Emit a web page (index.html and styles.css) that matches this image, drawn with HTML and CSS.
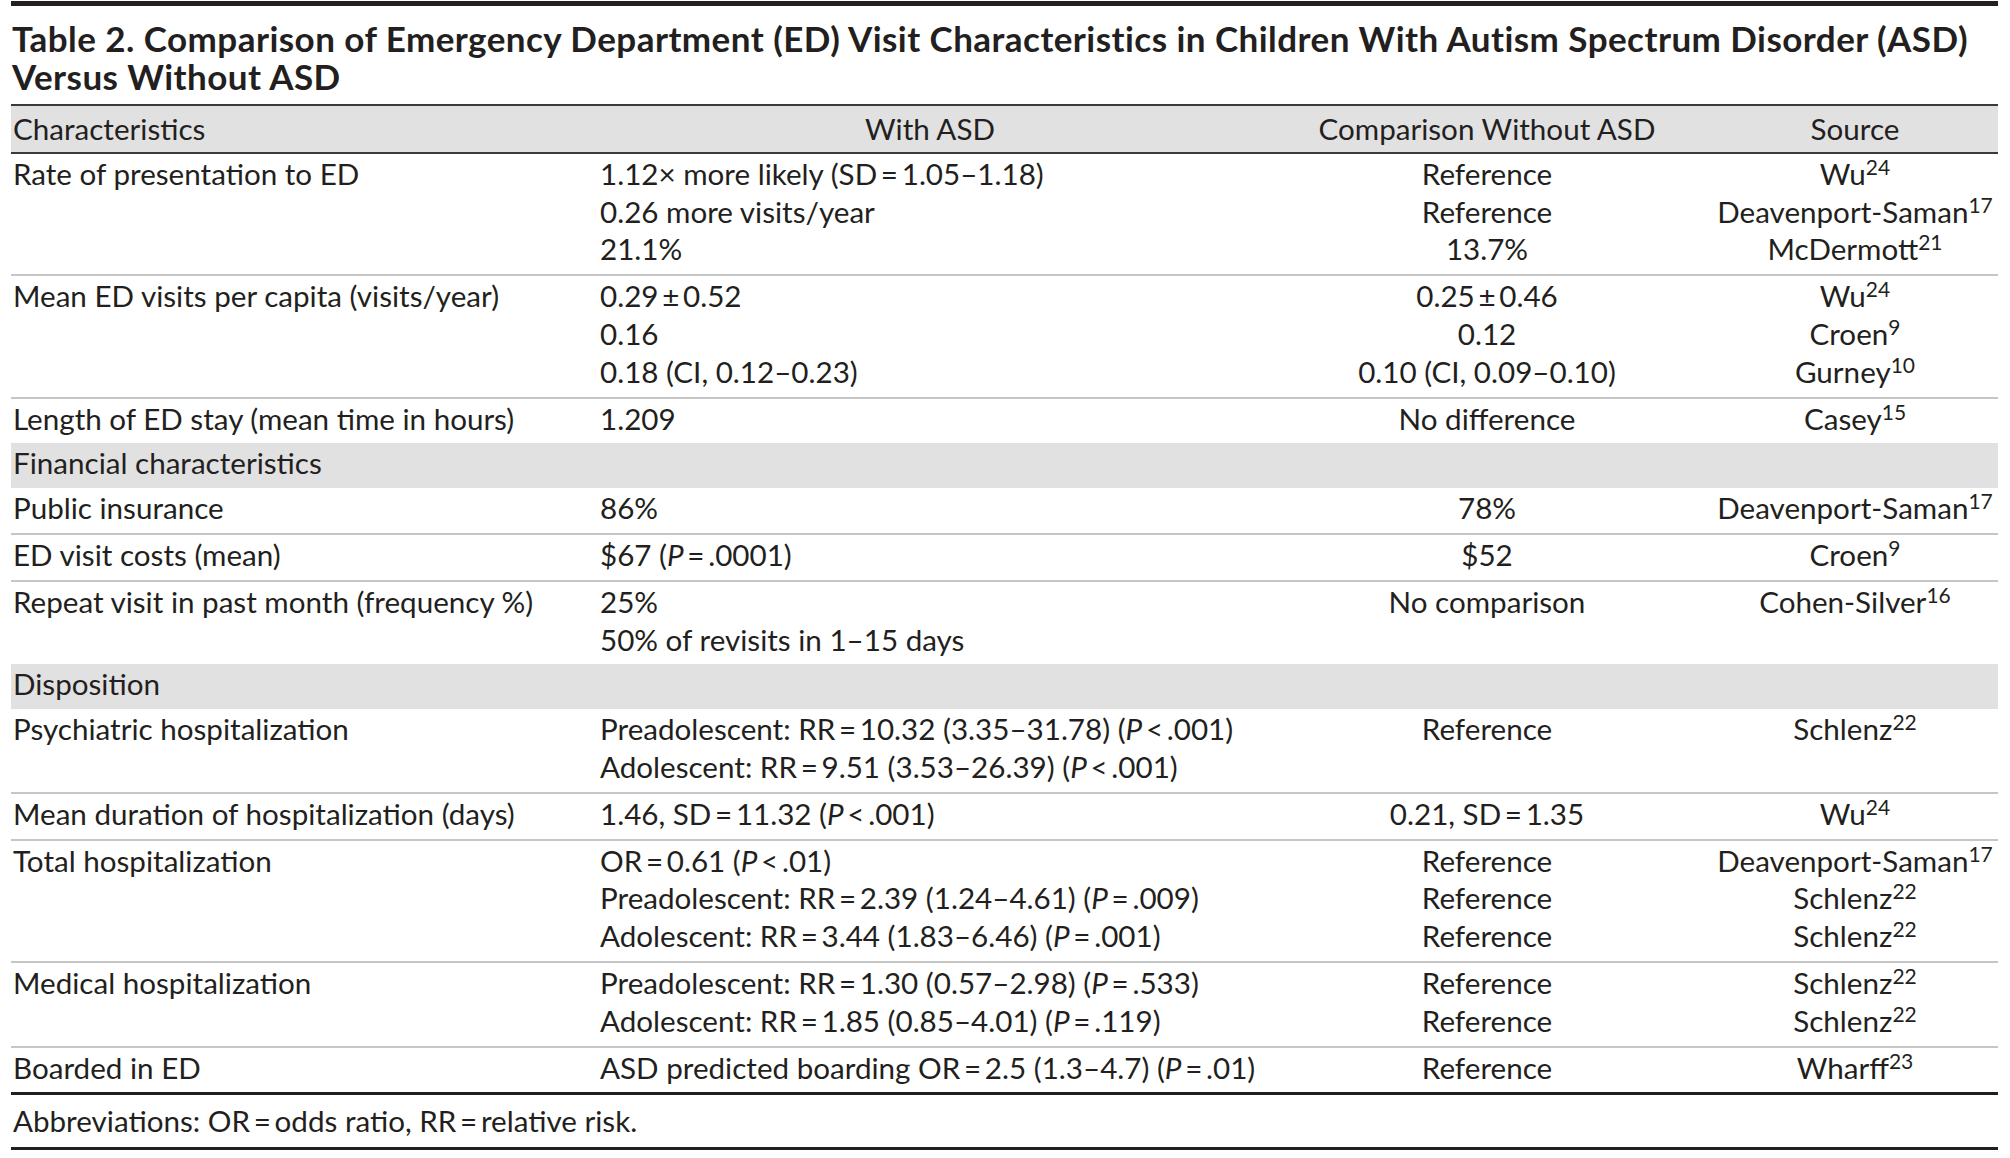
FILE: index.html
```html
<!DOCTYPE html>
<html lang="en">
<head>
<meta charset="utf-8">
<title>Table 2</title>
<link rel="stylesheet" href="styles.css">
</head>
<body>
<div class="page">
  <div class="topbar"></div>
  <h1 class="title">Table 2. Comparison of Emergency Department (ED) Visit Characteristics in Children With Autism Spectrum Disorder (ASD)<br>Versus Without ASD</h1>
  <table class="tbl">
    <colgroup><col class="c1"><col class="c2"><col class="c3"><col class="c4"></colgroup>
    <thead>
      <tr><th class="left">Characteristics</th><th>With ASD</th><th>Comparison Without ASD</th><th>Source</th></tr>
    </thead>
    <tbody>
      <tr class="row">
        <td>Rate of presentation to ED</td>
        <td>1.12× more likely (SD&#8201;=&#8201;1.05–1.18)<br>0.26 more visits/year<br>21.1%</td>
        <td class="mid">Reference<br>Reference<br>13.7%</td>
        <td class="mid">Wu<sup>24</sup><br>Deavenport-Saman<sup>17</sup><br>McDermott<sup>21</sup></td>
      </tr>
      <tr class="row">
        <td>Mean ED visits per capita (visits/year)</td>
        <td>0.29&#8201;±&#8201;0.52<br>0.16<br>0.18 (CI, 0.12–0.23)</td>
        <td class="mid">0.25&#8201;±&#8201;0.46<br>0.12<br>0.10 (CI, 0.09–0.10)</td>
        <td class="mid">Wu<sup>24</sup><br>Croen<sup>9</sup><br>Gurney<sup>10</sup></td>
      </tr>
      <tr class="row">
        <td>Length of ED stay (mean time in hours)</td>
        <td>1.209</td>
        <td class="mid">No difference</td>
        <td class="mid">Casey<sup>15</sup></td>
      </tr>
      <tr class="sec"><td colspan="4">Financial characteristics</td></tr>
      <tr class="row">
        <td>Public insurance</td>
        <td>86%</td>
        <td class="mid">78%</td>
        <td class="mid">Deavenport-Saman<sup>17</sup></td>
      </tr>
      <tr class="row">
        <td>ED visit costs (mean)</td>
        <td>$67 (<i>P</i>&#8201;=&#8201;.0001)</td>
        <td class="mid">$52</td>
        <td class="mid">Croen<sup>9</sup></td>
      </tr>
      <tr class="row">
        <td>Repeat visit in past month (frequency %)</td>
        <td>25%<br>50% of revisits in 1–15 days</td>
        <td class="mid">No comparison</td>
        <td class="mid">Cohen-Silver<sup>16</sup></td>
      </tr>
      <tr class="sec"><td colspan="4">Disposition</td></tr>
      <tr class="row">
        <td>Psychiatric hospitalization</td>
        <td>Preadolescent: RR&#8201;=&#8201;10.32 (3.35–31.78) (<i>P</i>&#8201;&lt;&#8201;.001)<br>Adolescent: RR&#8201;=&#8201;9.51 (3.53–26.39) (<i>P</i>&#8201;&lt;&#8201;.001)</td>
        <td class="mid">Reference</td>
        <td class="mid">Schlenz<sup>22</sup></td>
      </tr>
      <tr class="row">
        <td>Mean duration of hospitalization (days)</td>
        <td>1.46, SD&#8201;=&#8201;11.32 (<i>P</i>&#8201;&lt;&#8201;.001)</td>
        <td class="mid">0.21, SD&#8201;=&#8201;1.35</td>
        <td class="mid">Wu<sup>24</sup></td>
      </tr>
      <tr class="row">
        <td>Total hospitalization</td>
        <td>OR&#8201;=&#8201;0.61 (<i>P</i>&#8201;&lt;&#8201;.01)<br>Preadolescent: RR&#8201;=&#8201;2.39 (1.24–4.61) (<i>P</i>&#8201;=&#8201;.009)<br>Adolescent: RR&#8201;=&#8201;3.44 (1.83–6.46) (<i>P</i>&#8201;=&#8201;.001)</td>
        <td class="mid">Reference<br>Reference<br>Reference</td>
        <td class="mid">Deavenport-Saman<sup>17</sup><br>Schlenz<sup>22</sup><br>Schlenz<sup>22</sup></td>
      </tr>
      <tr class="row">
        <td>Medical hospitalization</td>
        <td>Preadolescent: RR&#8201;=&#8201;1.30 (0.57–2.98) (<i>P</i>&#8201;=&#8201;.533)<br>Adolescent: RR&#8201;=&#8201;1.85 (0.85–4.01) (<i>P</i>&#8201;=&#8201;.119)</td>
        <td class="mid">Reference<br>Reference</td>
        <td class="mid">Schlenz<sup>22</sup><br>Schlenz<sup>22</sup></td>
      </tr>
      <tr class="row">
        <td>Boarded in ED</td>
        <td>ASD predicted boarding OR&#8201;=&#8201;2.5 (1.3–4.7) (<i>P</i>&#8201;=&#8201;.01)</td>
        <td class="mid">Reference</td>
        <td class="mid">Wharff<sup>23</sup></td>
      </tr>
    </tbody>
    <tfoot>
      <tr class="foot"><td colspan="4">Abbreviations: OR&#8201;=&#8201;odds ratio, RR&#8201;=&#8201;relative risk.</td></tr>
    </tfoot>
  </table>
</div>
</body>
</html>
```

FILE: styles.css
```css
html, body {
  margin: 0;
  padding: 0;
  background: #ffffff;
}

body {
  font-family: "Lato", "Liberation Sans", sans-serif;
  color: #231f20;
}

.page {
  width: 1987px;
  padding: 1px 0 0 11px;
}

.topbar {
  height: 5px;
  background: #231f20;
}

.title {
  margin: 0;
  padding: 13px 0 9px 1px;
  font-size: 35px;
  font-weight: 700;
  letter-spacing: 0.45px;
  line-height: 38px;
  white-space: nowrap;
}

.tbl {
  width: 1987px;
  border-collapse: collapse;
  table-layout: fixed;
  font-size: 29.6px;
}

.c1 { width: 587px; }
.c2 { width: 664px; }
.c3 { width: 450px; }
.c4 { width: 286px; }

.tbl th {
  background: #e1e1e1;
  font-weight: 400;
  text-align: center;
  line-height: 37.8px;
  padding: 4px 2px 4px;
  border-top: 2px solid #3a3a3a;
  border-bottom: 2px solid #3a3a3a;
  white-space: nowrap;
}

.tbl th.left {
  text-align: left;
}

.tbl td {
  line-height: 37.8px;
  padding: 1px 2px 6px;
  vertical-align: top;
  text-align: left;
  white-space: nowrap;
}

.tbl td.mid {
  text-align: center;
}

.tbl tr.row + tr.row td {
  border-top: 2px solid #c6c6c6;
}

.tbl tr.sec td {
  background: #e1e1e1;
}

.tbl tr.foot td {
  border-top: 3px solid #231f20;
  border-bottom: 3px solid #231f20;
  padding: 7px 2px 7px;
}

sup {
  font-size: 21px;
  line-height: 0;
  vertical-align: 10px;
}

i {
  font-style: italic;
}
```
